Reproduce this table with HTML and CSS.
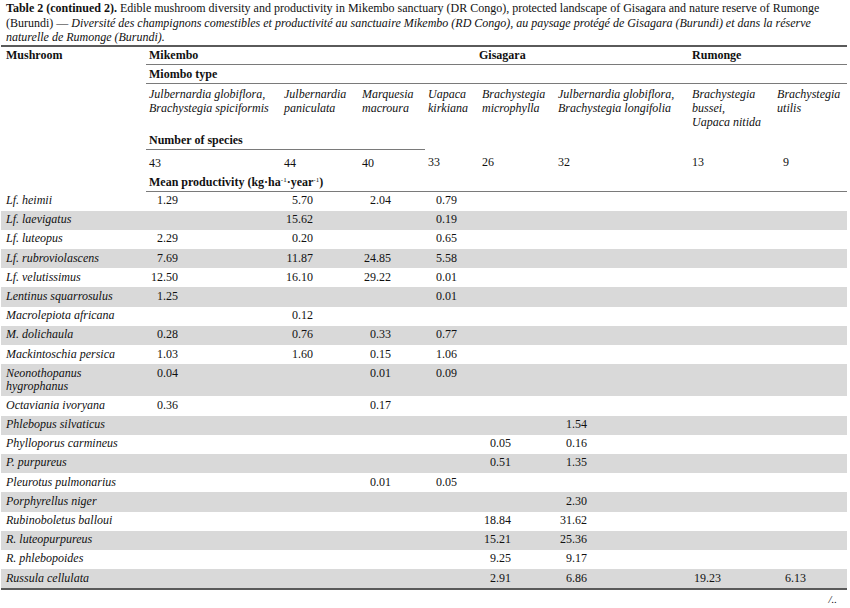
FILE: index.html
```html
<!DOCTYPE html>
<html lang="en">
<head>
    <meta charset="UTF-8">
    <title>Table 2 (continued 2)</title>
    <link rel="stylesheet" href="styles.css">
</head>
<body>
    <div class="page">
        <p class="caption">
            <b>Table 2 (continued 2).</b>
            <span>Edible mushroom diversity and productivity in Mikembo sanctuary (DR Congo), protected landscape of Gisagara and nature reserve of Rumonge</span>
            <span>(Burundi) &mdash;</span>
            <i>Diversité des champignons comestibles et productivité au sanctuaire Mikembo (RD Congo), au paysage protégé de Gisagara (Burundi) et dans la réserve</i>
            <i>naturelle de Rumonge (Burundi).</i>
        </p>
        <table class="data">
            <colgroup>
                <col class="c-name">
                <col class="c1">
                <col class="c2">
                <col class="c3">
                <col class="c4">
                <col class="c5">
                <col class="c6">
                <col class="c7">
                <col class="c8">
            </colgroup>
            <thead>
                <tr class="h-site">
                    <th class="mush" rowspan="6">Mushroom</th>
                    <th class="rule" colspan="4">Mikembo</th>
                    <th class="rule gis" colspan="2">Gisagara</th>
                    <th class="rule" colspan="2">Rumonge</th>
                </tr>
                <tr class="h-type">
                    <th class="rule" colspan="8">Miombo type</th>
                </tr>
                <tr class="h-species">
                    <td>Julbernardia globiflora,<br>Brachystegia spiciformis</td>
                    <td>Julbernardia<br>paniculata</td>
                    <td>Marquesia<br>macroura</td>
                    <td>Uapaca<br>kirkiana</td>
                    <td>Brachystegia<br>microphylla</td>
                    <td>Julbernardia globiflora,<br>Brachystegia longifolia</td>
                    <td>Brachystegia<br>bussei,<br>Uapaca nitida</td>
                    <td>Brachystegia<br>utilis</td>
                </tr>
                <tr class="h-label">
                    <th class="rule" colspan="3">Number of species</th>
                    <th colspan="5"></th>
                </tr>
                <tr class="h-count">
                    <td><span class="cnt">43</span></td>
                    <td><span class="cnt">44</span></td>
                    <td><span class="cnt">40</span></td>
                    <td><span class="cnt">33</span></td>
                    <td><span class="cnt">26</span></td>
                    <td><span class="cnt">32</span></td>
                    <td><span class="cnt">13</span></td>
                    <td><span class="cnt">9</span></td>
                </tr>
                <tr class="h-label">
                    <th class="rule" colspan="8">Mean productivity (kg·ha<sup>-1</sup>·year<sup>-1</sup>)</th>
                </tr>
            </thead>
            <tbody>
                <tr>
                    <td>Lf. heimii</td>
                    <td><span class="num">1.29</span></td>
                    <td><span class="num">5.70</span></td>
                    <td><span class="num">2.04</span></td>
                    <td><span class="num">0.79</span></td>
                    <td></td><td></td><td></td><td></td>
                </tr>
                <tr>
                    <td>Lf. laevigatus</td>
                    <td></td>
                    <td><span class="num">15.62</span></td>
                    <td></td>
                    <td><span class="num">0.19</span></td>
                    <td></td><td></td><td></td><td></td>
                </tr>
                <tr>
                    <td>Lf. luteopus</td>
                    <td><span class="num">2.29</span></td>
                    <td><span class="num">0.20</span></td>
                    <td></td>
                    <td><span class="num">0.65</span></td>
                    <td></td><td></td><td></td><td></td>
                </tr>
                <tr>
                    <td>Lf. rubroviolascens</td>
                    <td><span class="num">7.69</span></td>
                    <td><span class="num">11.87</span></td>
                    <td><span class="num">24.85</span></td>
                    <td><span class="num">5.58</span></td>
                    <td></td><td></td><td></td><td></td>
                </tr>
                <tr>
                    <td>Lf. velutissimus</td>
                    <td><span class="num">12.50</span></td>
                    <td><span class="num">16.10</span></td>
                    <td><span class="num">29.22</span></td>
                    <td><span class="num">0.01</span></td>
                    <td></td><td></td><td></td><td></td>
                </tr>
                <tr>
                    <td>Lentinus squarrosulus</td>
                    <td><span class="num">1.25</span></td>
                    <td></td>
                    <td></td>
                    <td><span class="num">0.01</span></td>
                    <td></td><td></td><td></td><td></td>
                </tr>
                <tr>
                    <td>Macrolepiota africana</td>
                    <td></td>
                    <td><span class="num">0.12</span></td>
                    <td></td><td></td><td></td><td></td><td></td><td></td>
                </tr>
                <tr>
                    <td>M. dolichaula</td>
                    <td><span class="num">0.28</span></td>
                    <td><span class="num">0.76</span></td>
                    <td><span class="num">0.33</span></td>
                    <td><span class="num">0.77</span></td>
                    <td></td><td></td><td></td><td></td>
                </tr>
                <tr>
                    <td>Mackintoschia persica</td>
                    <td><span class="num">1.03</span></td>
                    <td><span class="num">1.60</span></td>
                    <td><span class="num">0.15</span></td>
                    <td><span class="num">1.06</span></td>
                    <td></td><td></td><td></td><td></td>
                </tr>
                <tr>
                    <td>Neonothopanus<br>hygrophanus</td>
                    <td><span class="num">0.04</span></td>
                    <td></td>
                    <td><span class="num">0.01</span></td>
                    <td><span class="num">0.09</span></td>
                    <td></td><td></td><td></td><td></td>
                </tr>
                <tr>
                    <td>Octaviania ivoryana</td>
                    <td><span class="num">0.36</span></td>
                    <td></td>
                    <td><span class="num">0.17</span></td>
                    <td></td><td></td><td></td><td></td><td></td>
                </tr>
                <tr>
                    <td>Phlebopus silvaticus</td>
                    <td></td><td></td><td></td><td></td><td></td>
                    <td><span class="num">1.54</span></td>
                    <td></td><td></td>
                </tr>
                <tr>
                    <td>Phylloporus carmineus</td>
                    <td></td><td></td><td></td><td></td>
                    <td><span class="num">0.05</span></td>
                    <td><span class="num">0.16</span></td>
                    <td></td><td></td>
                </tr>
                <tr>
                    <td>P. purpureus</td>
                    <td></td><td></td><td></td><td></td>
                    <td><span class="num">0.51</span></td>
                    <td><span class="num">1.35</span></td>
                    <td></td><td></td>
                </tr>
                <tr>
                    <td>Pleurotus pulmonarius</td>
                    <td></td><td></td>
                    <td><span class="num">0.01</span></td>
                    <td><span class="num">0.05</span></td>
                    <td></td><td></td><td></td><td></td>
                </tr>
                <tr>
                    <td>Porphyrellus niger</td>
                    <td></td><td></td><td></td><td></td><td></td>
                    <td><span class="num">2.30</span></td>
                    <td></td><td></td>
                </tr>
                <tr>
                    <td>Rubinoboletus balloui</td>
                    <td></td><td></td><td></td><td></td>
                    <td><span class="num">18.84</span></td>
                    <td><span class="num">31.62</span></td>
                    <td></td><td></td>
                </tr>
                <tr>
                    <td>R. luteopurpureus</td>
                    <td></td><td></td><td></td><td></td>
                    <td><span class="num">15.21</span></td>
                    <td><span class="num">25.36</span></td>
                    <td></td><td></td>
                </tr>
                <tr>
                    <td>R. phlebopoides</td>
                    <td></td><td></td><td></td><td></td>
                    <td><span class="num">9.25</span></td>
                    <td><span class="num">9.17</span></td>
                    <td></td><td></td>
                </tr>
                <tr>
                    <td>Russula cellulata</td>
                    <td></td><td></td><td></td><td></td>
                    <td><span class="num">2.91</span></td>
                    <td><span class="num">6.86</span></td>
                    <td><span class="num">19.23</span></td>
                    <td><span class="num">6.13</span></td>
                </tr>
            </tbody>
        </table>
        <div class="more">/..</div>
    </div>
</body>
</html>
```

FILE: styles.css
```css
body {
    margin: 0;
    background-color: #fff;
    color: #111;
    font-family: "Liberation Serif", "Times New Roman", serif;
    font-size: 12px;
}
.page {
    width: 848px;
    padding: 1px 1px 0 1px;
}
.caption {
    margin: 0 0 0 5px;
    width: 840px;
    line-height: 14.5px;
    font-size: 12px;
}
.caption b {
    font-weight: bold;
}
.data {
    width: 846px;
    margin-top: 0;
    border-collapse: collapse;
    table-layout: fixed;
    border-top: 2px solid #5a5a5a;
    border-bottom: 2px solid #5a5a5a;
}
.c-name { width: 145px; }
.c1 { width: 135px; }
.c2 { width: 78px; }
.c3 { width: 66px; }
.c4 { width: 54px; }
.c5 { width: 76px; }
.c6 { width: 134px; }
.c7 { width: 85px; }
.c8 { width: 73px; }
.data th,
.data td {
    padding: 0 0 0 3px;
    text-align: left;
    vertical-align: top;
    line-height: 13px;
    white-space: nowrap;
}
.data th {
    font-weight: bold;
}
.data th.mush {
    padding: 2px 0 0 5px;
}
.data .rule {
    border-bottom: 1px solid #7a7a7a;
}
.data th.gis {
    padding-left: 0;
}
.h-site th {
    padding-top: 2px;
    padding-bottom: 2px;
}
.h-type th {
    padding-top: 3px;
    padding-bottom: 2px;
}
.h-species td {
    padding-top: 3px;
    padding-bottom: 2px;
    line-height: 14px;
    font-style: italic;
}
.h-label th {
    padding-top: 3px;
    padding-bottom: 2px;
}
.h-count td {
    padding-top: 7px;
    padding-bottom: 3px;
}
.h-label sup {
    font-size: 7px;
    line-height: 0;
    vertical-align: 4px;
    font-weight: normal;
}
.cnt {
    display: inline-block;
    width: 12px;
    text-align: right;
}
.data tbody td {
    padding-top: 2.5px;
    padding-bottom: 3.7px;
}
.data tbody td:first-child {
    padding-left: 5px;
    font-style: italic;
}
.data tbody tr:nth-child(even) {
    background-color: #d9d9d9;
}
.num {
    display: inline-block;
    width: 29px;
    text-align: right;
}
.more {
    width: 836px;
    text-align: right;
    font-style: italic;
    font-size: 11px;
    margin-top: 3px;
}
```
